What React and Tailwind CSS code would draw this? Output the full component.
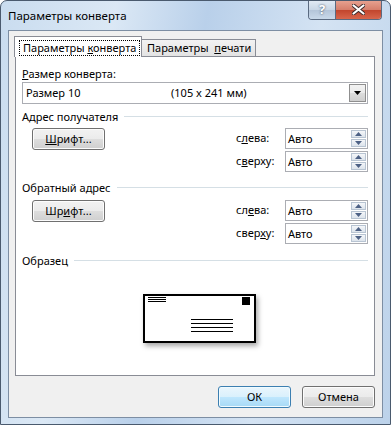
import React from "react";

const font = { fontFamily: '"Noto Sans", "DejaVu Sans", sans-serif' };

const U = ({ children }) => <span className="underline underline-offset-[1px]">{children}</span>;

const WinButton = ({ children, primary = false, className = "" }) => (
  <div
    className={`flex items-center justify-center h-[22px] w-[73px] rounded-[3px] border text-[11px] text-black ${
      primary
        ? "border-[#3c7fb1] bg-[linear-gradient(#eaf6fd_0%,#d9f0fc_50%,#bee6fd_51%,#a7d9f5_100%)] shadow-[inset_0_0_0_1px_#f0fbff]"
        : "border-[#707070] bg-[linear-gradient(#f2f2f2_0%,#ebebeb_50%,#dddddd_51%,#cfcfcf_100%)] shadow-[inset_0_0_0_1px_#fcfcfc]"
    } ${className}`}
  >
    {children}
  </div>
);

const SpinBox = () => (
  <div className="flex h-[21px] w-[83px] items-center border border-[#abadb3] bg-white pl-[2px] pr-[1px]">
    <span className="flex-1 text-[11px] leading-none">Авто</span>
    <div className="flex h-[17px] w-[15px] flex-col gap-[1px]">
      <div className="flex flex-1 items-center justify-center border border-[#b8c4d2] bg-[linear-gradient(#f4f6f9,#dde4ec)]">
        <svg width="7" height="4" viewBox="0 0 7 4"><path d="M0 4 L3.5 0 L7 4 Z" fill="#4d6185" /></svg>
      </div>
      <div className="flex flex-1 items-center justify-center border border-[#b8c4d2] bg-[linear-gradient(#f4f6f9,#dde4ec)]">
        <svg width="7" height="4" viewBox="0 0 7 4"><path d="M0 0 L3.5 4 L7 0 Z" fill="#4d6185" /></svg>
      </div>
    </div>
  </div>
);

const Header = ({ children, className = "" }) => (
  <div className={`flex h-[16px] items-center ${className}`}>
    <span className="text-[11px] leading-none whitespace-nowrap">{children}</span>
    <div className="ml-[6px] h-px flex-1 bg-[#d5dfe5]" />
  </div>
);

const FontRow = ({ btn, left, top, className = "" }) => (
  <div className={`flex items-start ${className}`}>
    <WinButton className="ml-[10px]">{btn}</WinButton>
    <div className="ml-auto flex flex-col gap-[2px]">
      <div className="flex items-center">
        <span className="w-[49px] text-[11px]">{left}</span>
        <SpinBox />
      </div>
      <div className="flex items-center">
        <span className="w-[49px] text-[11px]">{top}</span>
        <SpinBox />
      </div>
    </div>
  </div>
);

const Envelope = () => (
  <div className="ml-[121px] mt-[26px] h-[49px] w-[113px] bg-white shadow-[2px_3px_5px_rgba(0,0,0,0.35)]">
    <svg width="113" height="49" viewBox="0 0 113 49">
      <rect x="1" y="1" width="111" height="47" fill="white" stroke="black" strokeWidth="2" />
      <path d="M5 3.5 H23 M5 5.5 H23 M5 7.5 H23" stroke="black" strokeWidth="1" />
      <rect x="99" y="3" width="8" height="8" fill="black" />
      <path d="M48 25.5 H90 M48 29.5 H90 M48 33.5 H90 M48 37.5 H90" stroke="black" strokeWidth="1.2" />
    </svg>
  </div>
);

export default function App() {
  return (
    <div
      style={font}
      className="relative flex h-[425px] w-[391px] flex-col overflow-hidden rounded-t-[7px] border border-[#4a5a6e] bg-[linear-gradient(100deg,#c9dcef_0%,#dbe8f5_25%,#b9d0ea_45%,#d4e3f3_70%,#bcd2ea_100%)] text-black"
    >
      {/* title bar */}
      <div className="flex h-[29px] items-center pl-[7px]">
        <span className="text-[11.5px] text-black whitespace-nowrap">Параметры конверта</span>
      </div>
      <div className="absolute right-[8px] top-[-1px] flex h-[20px] overflow-hidden rounded-b-[4px] border border-t-0 border-[#5a6a80]">
        <div className="flex w-[27px] items-center justify-center border-r border-[#5a6a80] bg-[linear-gradient(#e4ecf5_0%,#c9d7e6_50%,#b3c4d8_51%,#c9d9ea_100%)] text-[13px] font-bold text-white [text-shadow:0_0_2px_#2b3a4f]">
          ?
        </div>
        <div className="flex w-[45px] items-center justify-center bg-[linear-gradient(#e8a493_0%,#d67f6c_50%,#c0432b_51%,#d8664c_100%)]">
          <svg width="13" height="11" viewBox="0 0 13 11">
            <path d="M1.5 1.5 L11.5 9.5 M11.5 1.5 L1.5 9.5" stroke="#3d2a2a" strokeWidth="4" strokeLinecap="round" />
            <path d="M1.5 1.5 L11.5 9.5 M11.5 1.5 L1.5 9.5" stroke="white" strokeWidth="2.2" strokeLinecap="round" />
          </svg>
        </div>
      </div>

      {/* client area */}
      <div className="mx-[7px] flex h-[388px] flex-col border border-[#7d8ea3] bg-[#f0f0f0] pl-[6px] pr-[7px]">
        {/* tabs */}
        <div className="relative z-10 -mb-px mt-[6px] flex h-[20px] items-end">
          <div className="-ml-px flex h-[21px] w-[128px] items-start border border-b-0 border-[#898c95] bg-white pl-[4px] pt-[3px]">
            <span className="whitespace-nowrap border border-dotted border-black px-[3px] text-[11px] leading-[14px]">
              Параметры <U>к</U>онверта
            </span>
          </div>
          <div className="flex h-[18px] w-[114px] items-center whitespace-nowrap border border-l-0 border-[#898c95] bg-[linear-gradient(#f2f2f2,#e3e3e3)] pl-[5px] text-[11px]">
            Параметры&nbsp;&nbsp;<U>п</U>ечати
          </div>
        </div>

        {/* panel */}
        <div className="flex h-[320px] flex-col border border-[#898c95] bg-white px-[6px] pt-[9px]">
          <div className="h-[16px] text-[11px] leading-[16px]">
            <U>Р</U>азмер конверта:
          </div>
          <div className="flex h-[22px] items-center border border-[#abadb3] bg-white pl-[3px] pr-[1px] text-[11px]">
            <span className="w-[145px]">Размер 10</span>
            <span className="flex-1">(105 x 241 мм)</span>
            <div className="flex h-[18px] w-[17px] items-center justify-center border border-[#8f8f8f] bg-[linear-gradient(#f2f2f2_0%,#ebebeb_50%,#dddddd_51%,#cfcfcf_100%)]">
              <svg width="7" height="4" viewBox="0 0 7 4"><path d="M0 0 L7 0 L3.5 4 Z" fill="black" /></svg>
            </div>
          </div>

          <Header className="mt-[4px]">Адрес получателя</Header>
          <FontRow
            className="mt-[4px]"
            btn={<><U>Ш</U>рифт...</>}
            left={<>с<U>л</U>ева:</>}
            top={<>с<U>в</U>ерху:</>}
          />

          <Header className="mt-[7px]">Обратный адрес</Header>
          <FontRow
            className="mt-[5px]"
            btn={<>Шр<U>и</U>фт...</>}
            left={<>сл<U>е</U>ва:</>}
            top={<>свер<U>х</U>у:</>}
          />

          <Header className="mt-[8px]">Образец</Header>
          <Envelope />
        </div>

        {/* bottom buttons */}
        <div className="mt-[10px] flex justify-end gap-[11px]">
          <WinButton primary>ОК</WinButton>
          <WinButton>Отмена</WinButton>
        </div>
      </div>
    </div>
  );
}
